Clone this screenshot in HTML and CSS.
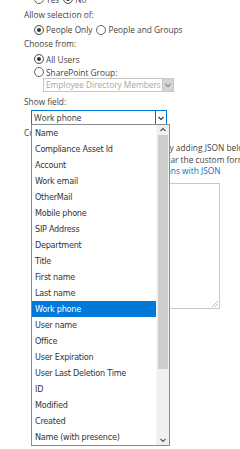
FILE: index.html
```html
<!DOCTYPE html>
<html lang="en">
<head>
<meta charset="UTF-8">
<title>Column settings</title>
<link rel="stylesheet" href="styles.css">
</head>
<body>
<div class="panel">
  <div class="radio-row first">
    <span class="radio"><span class="dot"></span>Yes</span>
    <span class="radio"><span class="dot on"></span>No</span>
  </div>

  <div class="label">Allow selection of:</div>
  <div class="radio-row">
    <span class="radio"><span class="dot on"></span>People Only</span>
    <span class="radio"><span class="dot"></span>People and Groups</span>
  </div>

  <div class="label">Choose from:</div>
  <div class="radio-row r-all">
    <span class="radio"><span class="dot on"></span>All Users</span>
  </div>
  <div class="radio-row r-group">
    <span class="radio"><span class="dot"></span>SharePoint Group:</span>
  </div>
  <div class="select disabled">
    <span class="select-text">Employee Directory Members</span>
    <span class="select-arrow">
      <svg viewBox="0 0 8 8"><path d="M1.5 3l2.5 2.5L6.5 3" fill="none" stroke="currentColor" stroke-width="1.1"/></svg>
    </span>
  </div>

  <div class="label show">Show field:</div>
  <div class="field-wrap">
    <div class="select active">
      <span class="select-text">Work phone</span>
      <span class="select-arrow">
        <svg viewBox="0 0 8 8"><path d="M1.5 3l2.5 2.5L6.5 3" fill="none" stroke="currentColor" stroke-width="1.1"/></svg>
      </span>
    </div>

    <div class="dropdown">
      <ul class="options">
        <li>Name</li>
        <li>Compliance Asset Id</li>
        <li>Account</li>
        <li>Work email</li>
        <li>OtherMail</li>
        <li>Mobile phone</li>
        <li>SIP Address</li>
        <li>Department</li>
        <li>Title</li>
        <li>First name</li>
        <li>Last name</li>
        <li class="selected">Work phone</li>
        <li>User name</li>
        <li>Office</li>
        <li>User Expiration</li>
        <li>User Last Deletion Time</li>
        <li>ID</li>
        <li>Modified</li>
        <li>Created</li>
        <li>Name (with presence)</li>
      </ul>
      <div class="scrollbar">
        <div class="sb-btn">
          <svg viewBox="0 0 8 8"><path d="M1.5 5L4 2.5 6.5 5" fill="none" stroke="#555" stroke-width="1.1"/></svg>
        </div>
        <div class="sb-thumb"></div>
        <div class="sb-track"></div>
        <div class="sb-btn">
          <svg viewBox="0 0 8 8"><path d="M1.5 3l2.5 2.5L6.5 3" fill="none" stroke="#555" stroke-width="1.1"/></svg>
        </div>
      </div>
    </div>
  </div>

  <div class="label fmt">Column formatting</div>
  <p class="desc">
    Change the display of this column by adding JSON below.<br>
    Remove the text from the box to clear the custom formatting.<br>
    <a href="#">Learn more about formatting columns with JSON</a>
  </p>
  <div class="json-box">
    <span class="grip"></span>
  </div>
</div>
</body>
</html>
```

FILE: styles.css
```css
html, body {
  height: 100%;
}
body {
  margin: 0;
  background: #fff;
  font-family: "Open Sans", "Noto Sans", sans-serif;
  font-size: 8.3px;
  color: #444;
  overflow: hidden;
}

.panel {
  padding-left: 24px;
  width: 216px;
  height: 449px;
  overflow: hidden;
}

.label {
  height: 14px;
  line-height: 14px;
  white-space: nowrap;
}

.radio-row {
  height: 15px;
  display: flex;
  align-items: center;
  gap: 4px;
  padding-left: 10px;
  white-space: nowrap;
}
.radio-row.first {
  margin-top: -8px;
  height: 14px;
  margin-bottom: 2px;
}
.radio-row.r-all {
  margin-top: 1px;
  height: 14px;
}
.radio-row.r-group {
  height: 12px;
}

.radio {
  display: inline-flex;
  align-items: center;
}
.dot {
  width: 8px;
  height: 8px;
  border: 1px solid #666;
  border-radius: 50%;
  margin-right: 2px;
  background: #fff;
}
.dot.on {
  background: #333;
  box-shadow: inset 0 0 0 2px #fff;
}

.select {
  display: flex;
  align-items: stretch;
  height: 14px;
  box-sizing: border-box;
  border: 1px solid #c6c6c6;
  white-space: nowrap;
}
.select-text {
  flex: 1;
  padding-left: 2px;
  line-height: 12px;
  overflow: hidden;
}
.select-arrow {
  width: 10px;
  display: flex;
  align-items: center;
  justify-content: center;
}
.select-arrow svg {
  width: 8px;
  height: 8px;
}

.select.disabled {
  margin-left: 19px;
  width: 131px;
  color: #a6a6a6;
}
.select.disabled .select-arrow {
  background: #d4d4d4;
  color: #8a8a8a;
  border-left: 1px solid #c6c6c6;
}

.label.show {
  margin-top: 3px;
}

.field-wrap {
  position: relative;
  margin-left: 7px;
  margin-top: 1px;
}
.select.active {
  width: 136px;
  height: 15px;
  border-color: #0078d7;
  color: #333;
}
.select.active .select-text {
  line-height: 13px;
}
.select.active .select-arrow {
  width: 10px;
  border-left: 1px solid #0078d7;
  color: #333;
}

.dropdown {
  position: absolute;
  left: 0;
  top: 14px;
  width: 139px;
  height: 322px;
  box-sizing: border-box;
  border: 1px solid #8a8a8a;
  background: #fff;
  display: flex;
  z-index: 2;
}
.options {
  list-style: none;
  margin: 0;
  padding: 0;
  flex: 1;
  font-family: "DejaVu Sans", Verdana, sans-serif;
  font-size: 8.1px;
  letter-spacing: -0.25px;
  color: #333;
}
.options li {
  height: 16px;
  line-height: 16px;
  padding-left: 3px;
  white-space: nowrap;
  overflow: hidden;
}
.options li.selected {
  background: #0078d7;
  color: #fff;
}

.scrollbar {
  width: 12px;
  display: flex;
  flex-direction: column;
  background: #f0f0f0;
  border-left: 1px solid #f6f6f6;
}
.sb-btn {
  height: 10px;
  display: flex;
  align-items: center;
  justify-content: center;
}
.sb-btn svg {
  width: 8px;
  height: 8px;
}
.sb-thumb {
  height: 234px;
  margin: 0 1px;
  background: #cdcdcd;
}
.sb-track {
  flex: 1;
}

.label.fmt {
  margin-top: 1px;
}

.desc {
  margin: 2px 0 0;
  padding-left: 7px;
  font-size: 8.35px;
  line-height: 11.5px;
  white-space: nowrap;
}
.desc a {
  color: #0072c6;
  text-decoration: none;
}

.json-box {
  position: relative;
  margin: 6px 0 0 7px;
  width: 189px;
  height: 126px;
  box-sizing: border-box;
  border: 1px solid #c8c8c8;
}
.grip {
  position: absolute;
  right: 1px;
  bottom: 1px;
  width: 6px;
  height: 6px;
  background: linear-gradient(135deg, transparent 45%, #bbb 45%, #bbb 55%, transparent 55%, transparent 70%, #bbb 70%, #bbb 80%, transparent 80%);
}
```
